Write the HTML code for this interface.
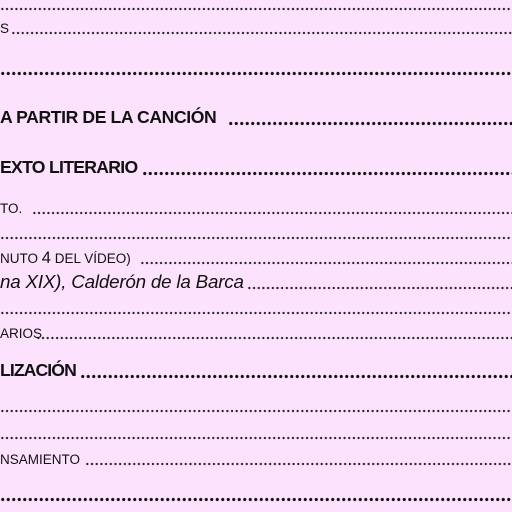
<!DOCTYPE html>
<html><head><meta charset="utf-8"><style>
html,body{margin:0;padding:0}
body{width:512px;height:512px;background:#fce2fc;position:relative;overflow:hidden;font-family:"Liberation Sans",sans-serif;color:#111}
.t{position:absolute;left:0;white-space:nowrap;line-height:1}
.d{position:absolute;right:0;height:4px;background:radial-gradient(circle,#222 0.9px,rgba(0,0,0,0) 1.4px);background-size:4.7px 4px;background-repeat:repeat-x}
.b{height:5px;background:radial-gradient(circle,#111 1.3px,rgba(0,0,0,0) 1.9px);background-size:5.5px 5px;background-repeat:repeat-x}
.s{font-size:13.5px}
.h{font-size:17.6px;font-weight:bold}
.i{font-size:18.8px;font-style:italic;letter-spacing:-0.2px}
</style></head><body>
<div class="d" style="left:0;top:7px"></div>

<div class="t s" style="top:22px">S</div>
<div class="d" style="left:11px;top:31px"></div>

<div class="d b" style="left:0;top:71px"></div>

<div class="t h" style="top:109px;letter-spacing:-0.4px">A PARTIR DE LA CANCIÓN</div>
<div class="d b" style="left:228px;top:121px"></div>

<div class="t h" style="top:159px;letter-spacing:-0.7px">EXTO LITERARIO</div>
<div class="d b" style="left:142px;top:171px"></div>

<div class="t s" style="top:202px">TO.</div>
<div class="d" style="left:32px;top:211px"></div>

<div class="d" style="left:0;top:236px"></div>

<div class="t s" style="top:250px">NUTO <span style="font-size:16.5px">4</span> DEL VÍDEO)</div>
<div class="d" style="left:140px;top:261px"></div>

<div class="t i" style="top:273px">na XIX), Calderón de la Barca</div>
<div class="d" style="left:247px;top:286px"></div>

<div class="d" style="left:0;top:311px"></div>

<div class="t s" style="top:327px">ARIOS</div>
<div class="d" style="left:36px;top:336px"></div>

<div class="t h" style="top:362px;letter-spacing:-0.9px">LIZACIÓN</div>
<div class="d b" style="left:80px;top:374px"></div>

<div class="d" style="left:0;top:409px"></div>
<div class="d" style="left:0;top:436px"></div>

<div class="t s" style="top:453px">NSAMIENTO</div>
<div class="d" style="left:85px;top:462px"></div>

<div class="d b" style="left:0;top:497px"></div>
</body></html>
